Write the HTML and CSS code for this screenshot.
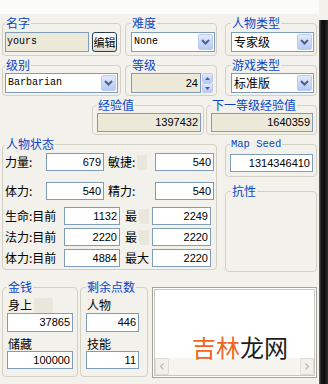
FILE: index.html
```html
<!DOCTYPE html>
<html lang="zh-CN">

<head>
  <meta charset="UTF-8">
  <title>人物编辑</title>
  <link rel="stylesheet" href="styles.css">
</head>

<body>
  <div class="window">
    <div class="panel">

      <div class="row r1">
        <fieldset class="g c1">
          <legend>名字</legend>
          <div class="line">
            <div class="box ro h20 mono name">yours</div>
            <div class="btn">编辑</div>
          </div>
        </fieldset>
        <fieldset class="g c2">
          <legend>难度</legend>
          <div class="sel"><span class="txt mono">None</span><span class="arr"><svg width="9" height="6" viewBox="0 0 9 6"><path d="M1 1l3.5 3.5L8 1" fill="none" stroke="#4d6185" stroke-width="2"/></svg></span></div>
        </fieldset>
        <fieldset class="g c3">
          <legend>人物类型</legend>
          <div class="sel"><span class="txt">专家级</span><span class="arr"><svg width="9" height="6" viewBox="0 0 9 6"><path d="M1 1l3.5 3.5L8 1" fill="none" stroke="#4d6185" stroke-width="2"/></svg></span></div>
        </fieldset>
      </div>

      <div class="row r2">
        <fieldset class="g c1">
          <legend>级别</legend>
          <div class="sel wide"><span class="txt mono">Barbarian</span><span class="arr"><svg width="9" height="6" viewBox="0 0 9 6"><path d="M1 1l3.5 3.5L8 1" fill="none" stroke="#4d6185" stroke-width="2"/></svg></span></div>
        </fieldset>
        <fieldset class="g c2">
          <legend>等级</legend>
          <div class="spin">
            <div class="box ro h20 num level">24</div>
            <div class="spin-btns">
              <span class="sbtn"><svg width="5" height="3" viewBox="0 0 5 3"><path d="M0 3L2.5 0L5 3z" fill="#4d6185"/></svg></span>
              <span class="sbtn"><svg width="5" height="3" viewBox="0 0 5 3"><path d="M0 0L2.5 3L5 0z" fill="#4d6185"/></svg></span>
            </div>
          </div>
        </fieldset>
        <fieldset class="g c3">
          <legend>游戏类型</legend>
          <div class="sel"><span class="txt">标准版</span><span class="arr"><svg width="9" height="6" viewBox="0 0 9 6"><path d="M1 1l3.5 3.5L8 1" fill="none" stroke="#4d6185" stroke-width="2"/></svg></span></div>
        </fieldset>
      </div>

      <div class="row r3">
        <fieldset class="g exp">
          <legend>经验值</legend>
          <div class="box ro h19 num">1397432</div>
        </fieldset>
        <fieldset class="g next">
          <legend>下一等级经验值</legend>
          <div class="box ro h19 num">1640359</div>
        </fieldset>
      </div>

      <div class="row r4">
        <fieldset class="g status">
          <legend>人物状态</legend>
          <div class="srow two">
            <span class="cap">力量:</span>
            <div class="box num">679</div>
            <span class="cap pad4">敏捷:<i class="shade"></i></span>
            <div class="box num">540</div>
          </div>
          <div class="srow two sp11">
            <span class="cap">体力:</span>
            <div class="box num">540</div>
            <span class="cap pad4">精力:</span>
            <div class="box num">540</div>
          </div>
          <div class="srow three sp7">
            <span class="cap">生命:目前</span>
            <div class="box num">1132</div>
            <span class="cap pad5">最<i class="shade"></i></span>
            <div class="box num">2249</div>
          </div>
          <div class="srow three sp3">
            <span class="cap">法力:目前</span>
            <div class="box num">2220</div>
            <span class="cap pad5">最<i class="shade"></i></span>
            <div class="box num">2220</div>
          </div>
          <div class="srow three sp3">
            <span class="cap">体力:目前</span>
            <div class="box num">4884</div>
            <span class="cap pad5">最大</span>
            <div class="box num">2220</div>
          </div>
        </fieldset>

        <div class="side">
          <fieldset class="g seed">
            <legend class="mono">Map Seed</legend>
            <div class="box num">1314346410</div>
          </fieldset>
          <fieldset class="g resist">
            <legend>抗性</legend>
          </fieldset>
        </div>
      </div>

      <div class="row r5">
        <fieldset class="g money">
          <legend>金钱</legend>
          <div class="cap2">身上<i class="shade wide-shade"></i></div>
          <div class="box num h19 gap1">37865</div>
          <div class="cap2 gap5">储藏</div>
          <div class="box num">100000</div>
        </fieldset>
        <fieldset class="g points">
          <legend>剩余点数</legend>
          <div class="cap2">人物</div>
          <div class="box num h19 gap1">446</div>
          <div class="cap2 gap5">技能</div>
          <div class="box num">11</div>
        </fieldset>
        <div class="memo">
          <div class="mark"><span class="orange">吉林</span>龙网</div>
          <div class="hscroll">
            <span class="sb-btn"><svg width="4" height="7" viewBox="0 0 4 7"><path d="M3.5 0.5L0.5 3.5L3.5 6.5" fill="none" stroke="#b9b8b0" stroke-width="1.2"/></svg></span>
            <span class="track"></span>
            <span class="sb-btn"><svg width="4" height="7" viewBox="0 0 4 7"><path d="M0.5 0.5L3.5 3.5L0.5 6.5" fill="none" stroke="#b9b8b0" stroke-width="1.2"/></svg></span>
          </div>
        </div>
      </div>

    </div>
    <div class="edge"></div>
  </div>
</body>

</html>
```

FILE: styles.css
```css
body {
  margin: 0;
  background-color: #f2f1eb;
  font-family: "Noto Sans CJK SC", sans-serif;
  font-size: 12px;
  line-height: 14px;
  color: #000;
  overflow: hidden;
}

.window {
  display: flex;
  width: 328px;
  height: 384px;
}

.panel {
  width: 319px;
  height: 384px;
  box-sizing: border-box;
  padding: 16px 0 0 2px;
  background: linear-gradient(#fbfbf8 0, #fbfbf8 14px, #f2f1eb 14px);
}

.edge {
  width: 9px;
  margin-top: 20px;
  background: linear-gradient(90deg, #6a6a66 0, #1b1b1b 2px, #0b0b0b 5px, #2c2c2c 9px);
}

.row {
  display: flex;
  align-items: flex-start;
}

.r2,
.r3,
.r4 {
  margin-top: 2px;
}

.r5 {
  margin-top: 8px;
}

/* group boxes */
fieldset.g {
  margin: 0;
  min-width: 0;
  box-sizing: border-box;
  border: 1px solid #d3d1c4;
  border-radius: 4px;
  padding: 2px 2px 3px 5px;
}

.g legend {
  padding: 0 1px;
  color: #0b46c8;
  line-height: 14px;
}

.g legend.mono {
  font-size: 10.5px;
}

.r1 .g {
  padding-top: 2px;
  padding-bottom: 3px;
}

.r2 .g,
.r3 .g {
  padding-top: 1px;
  padding-bottom: 2px;
}

.c1 {
  width: 119px;
  padding-left: 2px !important;
  padding-right: 2px !important;
}

.c2 {
  width: 92px;
  margin-left: 4px !important;
  padding-right: 1px !important;
}

.c3 {
  width: 92px;
  margin-left: 8px !important;
}

.exp {
  width: 112px;
  margin-left: 90px !important;
  padding-left: 4px !important;
}

.next {
  width: 111px;
  margin-left: 2px !important;
  padding-left: 4px !important;
  padding-right: 3px !important;
}

.status {
  width: 215px;
  padding: 2px 1px 2px 2px !important;
}

.side {
  width: 92px;
  margin-left: 8px;
  display: flex;
  flex-direction: column;
}

.seed {
  padding: 3px 3px 4px 4px !important;
}

.resist {
  margin-top: 7px !important;
  height: 88px;
}

.money {
  width: 76px;
  padding: 4px 3px 7px 4px !important;
}

.points {
  width: 68px;
  margin-left: 2px !important;
  padding: 4px 3px 7px 5px !important;
}

.money .box {
  width: 66px;
}

.points .box {
  width: 53px;
}

/* text boxes */
.box {
  box-sizing: border-box;
  height: 18px;
  border: 1px solid #7f9db9;
  background: #fff;
  line-height: 16px;
  white-space: nowrap;
  overflow: hidden;
}

.h19 {
  height: 19px;
  line-height: 17px;
}

.h20 {
  height: 20px;
  line-height: 18px;
}

.ro {
  background: #ece9d8;
}

.num {
  font-family: "Liberation Sans", sans-serif;
  font-size: 11px;
  text-align: right;
  padding-right: 2px;
}

.mono {
  font-family: "Liberation Mono", monospace;
  font-size: 10px;
}

.line {
  display: flex;
  gap: 3px;
}

.name {
  width: 84px;
  padding-left: 1px;
}

.btn {
  width: 25px;
  height: 20px;
  box-sizing: border-box;
  border: 1px solid #2a3f5c;
  border-radius: 3px;
  background: linear-gradient(#ffffff, #f3f2ec 70%, #dcd9cc);
  font-size: 11px;
  line-height: 18px;
  text-align: center;
  white-space: nowrap;
  overflow: hidden;
}

/* drop down */
.sel {
  display: flex;
  align-items: center;
  box-sizing: border-box;
  height: 20px;
  border: 1px solid #7f9db9;
  background: #fff;
}

.sel.wide {
  width: 113px;
}

.sel .txt {
  flex: 1;
  padding-left: 2px;
  white-space: nowrap;
}

.arr {
  width: 15px;
  height: 16px;
  margin-right: 1px;
  box-sizing: border-box;
  border: 1px solid #bccbf0;
  border-radius: 2px;
  background: linear-gradient(#e3eafd, #b6c8f5);
  display: flex;
  align-items: center;
  justify-content: center;
}

/* spinner */
.spin {
  display: flex;
  gap: 1px;
}

.level {
  width: 70px;
}

.spin-btns {
  display: flex;
  flex-direction: column;
  width: 11px;
}

.sbtn {
  height: 10px;
  box-sizing: border-box;
  border: 1px solid #bccbf0;
  border-radius: 2px;
  background: linear-gradient(#e3eafd, #b6c8f5);
  display: flex;
  align-items: center;
  justify-content: center;
}

/* stats */
.srow {
  display: grid;
  align-items: center;
}

.srow.two {
  grid-template-columns: 41px 58px 51px 59px;
}

.srow.three {
  grid-template-columns: 59px 56px 32px 59px;
}

.sp11 {
  margin-top: 11px;
}

.sp7 {
  margin-top: 7px;
}

.sp3 {
  margin-top: 3px;
}

.cap {
  display: flex;
  align-items: center;
  line-height: 18px;
  white-space: nowrap;
}

.pad4 {
  padding-left: 4px;
}

.pad5 {
  padding-left: 5px;
}

.shade {
  display: inline-block;
  width: 10px;
  height: 15px;
  margin-left: 2px;
  background: #e9e7dc;
}

.cap2 {
  display: flex;
  align-items: center;
  height: 14px;
  padding-left: 1px;
}

.wide-shade {
  width: 19px;
}

.gap1 {
  margin-top: 1px;
}

.gap5 {
  margin-top: 5px;
}

/* memo */
.memo {
  position: relative;
  width: 165px;
  height: 91px;
  margin-left: 4px;
  margin-top: 7px;
  box-sizing: border-box;
  display: flex;
  flex-direction: column;
  justify-content: flex-end;
  border: 1px solid #a3a39b;
  background: #fff;
  box-shadow: inset 0 0 0 1px #fff, inset 0 0 0 2px #c8c7be;
  padding: 2px;
}

.mark {
  position: absolute;
  left: 39px;
  top: 47px;
  font-size: 24px;
  line-height: 24px;
  color: #1c1c1c;
  z-index: 1;
}

.orange {
  color: #f0641f;
}

.hscroll {
  display: flex;
  height: 17px;
  background: #f5f4ef;
}

.sb-btn {
  width: 14px;
  height: 17px;
  box-sizing: border-box;
  border: 1px solid #dedcd3;
  border-radius: 2px;
  background: #f1f0ea;
  display: flex;
  align-items: center;
  justify-content: center;
}

.track {
  flex: 1;
}
```
